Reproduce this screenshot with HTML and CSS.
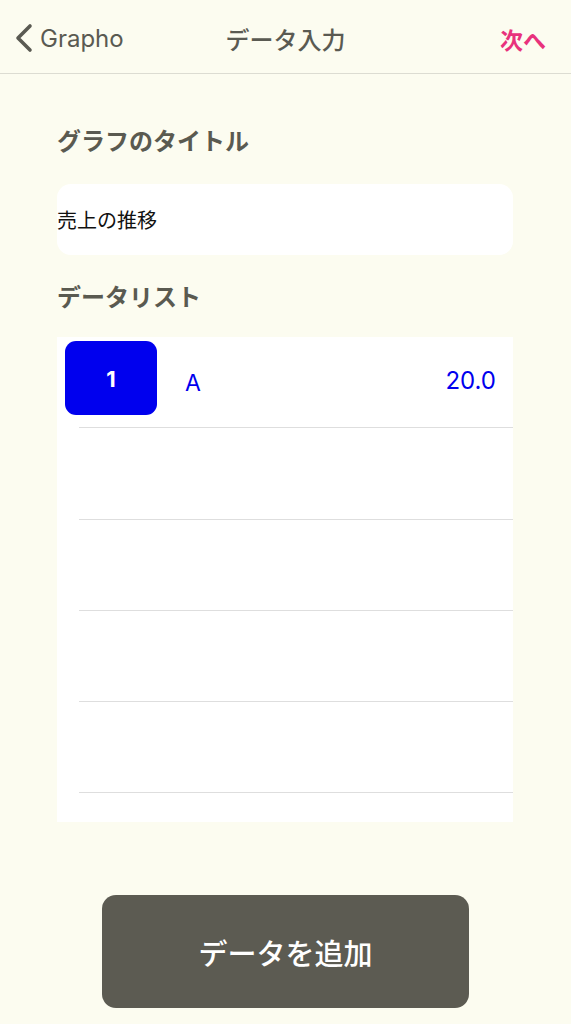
FILE: index.html
```html
<!DOCTYPE html>
<html lang="ja">
<head>
  <meta charset="UTF-8" />
  <meta name="viewport" content="width=device-width, initial-scale=1.0"/>
  <title>データ入力</title>
  <link rel="stylesheet" href="styles.css">
</head>
<body>
  <header class="nav">
    <div class="nav-back">
      <svg class="chevron" width="20" height="30" viewBox="0 0 20 30">
        <path d="M16 3 L4 15 L16 27" fill="none" stroke="#5a5a52" stroke-width="3.6" stroke-linecap="round" stroke-linejoin="round"/>
      </svg>
      <span>Grapho</span>
    </div>
    <div class="nav-title">データ入力</div>
    <div class="nav-next">次へ</div>
  </header>

  <main class="content">
    <h2 class="section-label">グラフのタイトル</h2>
    <div class="title-input">売上の推移</div>

    <h2 class="section-label">データリスト</h2>
    <ul class="data-list">
      <li class="data-row">
        <span class="badge">1</span>
        <span class="row-name">A</span>
        <span class="row-value">20.0</span>
      </li>
      <li class="data-row"></li>
      <li class="data-row"></li>
      <li class="data-row"></li>
      <li class="data-row"></li>
      <li class="data-row"></li>
    </ul>

    <div class="actions">
      <button class="add-btn">データを追加</button>
    </div>
  </main>
</body>
</html>
```

FILE: styles.css
```css
body {
  margin: 0;
  background: #fcfcf0;
  font-family: Inter, 'Noto Sans CJK JP', sans-serif;
  color: #5a5a52;
}

.nav {
  height: 73px;
  border-bottom: 1px solid #dcdcd2;
  display: flex;
  align-items: center;
  justify-content: space-between;
  padding: 0 25px 0 14px;
  position: relative;
}

.nav-back {
  display: flex;
  align-items: center;
  gap: 6px;
  font-size: 24px;
  color: #5a5a52;
  padding-top: 4px;
}

.chevron {
  margin-top: -2px;
}

.nav-title {
  position: absolute;
  left: 0;
  right: 0;
  text-align: center;
  font-size: 24px;
  font-weight: 500;
  padding-top: 4px;
  pointer-events: none;
}

.nav-next {
  color: #e8327c;
  font-size: 23px;
  font-weight: 700;
  padding-top: 4px;
}

.content {
  padding: 0 58px 0 57px;
}

.section-label {
  margin: 0;
  font-size: 24px;
  font-weight: 700;
  color: #5a5a50;
  line-height: 32px;
  padding-top: 52px;
  padding-bottom: 26px;
}

.title-input {
  height: 71px;
  background: #fff;
  border-radius: 14px;
  display: flex;
  align-items: center;
  font-size: 20px;
  color: #111;
}

.title-input + .section-label {
  padding-top: 27px;
  padding-bottom: 23px;
}

.data-list {
  list-style: none;
  margin: 0;
  padding: 0;
  background: #fff;
  height: 485px;
  overflow: hidden;
}

.data-row {
  height: 91.3px;
  margin-left: 22px;
  border-bottom: 1px solid #dedede;
  box-sizing: border-box;
  display: flex;
  align-items: center;
  position: relative;
  color: #0000ee;
}

.badge {
  position: absolute;
  left: -14px;
  top: 4px;
  width: 92px;
  height: 74px;
  background: #0000ee;
  border-radius: 11px;
  color: #fff;
  font-size: 22px;
  font-weight: 700;
  display: flex;
  align-items: center;
  justify-content: center;
  padding-top: 1px;
  box-sizing: border-box;
}

.row-name {
  margin-left: 106px;
  font-size: 23px;
  flex: 1;
  padding-top: 2px;
}

.row-value {
  margin-right: 17px;
  font-size: 24px;
  margin-top: -4px;
}

.actions {
  display: flex;
  justify-content: center;
  padding-top: 73px;
  padding-left: 1px;
}

.add-btn {
  width: 367px;
  height: 113px;
  border: none;
  border-radius: 14px;
  background: #5c5b52;
  color: #fff;
  font-family: 'Noto Sans CJK JP', sans-serif;
  font-size: 29px;
  font-weight: 500;
}
```
